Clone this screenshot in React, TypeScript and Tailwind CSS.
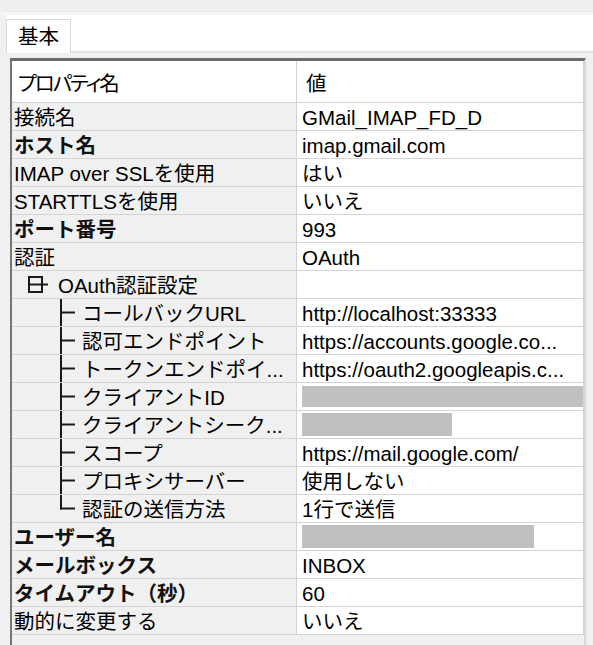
type Row = {
  label: string;
  value?: string;
  bold?: boolean;
  group?: boolean;
  child?: boolean;
  last?: boolean;
  mask?: number | "full";
};

const rows: Row[] = [
  { label: "接続名", value: "GMail_IMAP_FD_D" },
  { label: "ホスト名", value: "imap.gmail.com", bold: true },
  { label: "IMAP over SSLを使用", value: "はい" },
  { label: "STARTTLSを使用", value: "いいえ" },
  { label: "ポート番号", value: "993", bold: true },
  { label: "認証", value: "OAuth" },
  { label: "OAuth認証設定", group: true },
  { label: "コールバックURL", value: "http://localhost:33333", child: true },
  { label: "認可エンドポイント", value: "https://accounts.google.co...", child: true },
  { label: "トークンエンドポイ...", value: "https://oauth2.googleapis.c...", child: true },
  { label: "クライアントID", mask: "full", child: true },
  { label: "クライアントシーク...", mask: 150, child: true },
  { label: "スコープ", value: "https://mail.google.com/", child: true },
  { label: "プロキシサーバー", value: "使用しない", child: true },
  { label: "認証の送信方法", value: "1行で送信", child: true, last: true },
  { label: "ユーザー名", mask: 232, bold: true },
  { label: "メールボックス", value: "INBOX", bold: true },
  { label: "タイムアウト（秒）", value: "60", bold: true },
  { label: "動的に変更する", value: "いいえ" },
];

function Expander() {
  return (
    <svg width="20" height="17" viewBox="0 0 20 17" className="shrink-0">
      <rect x="1" y="1" width="13" height="15" fill="none" stroke="#1a1a1a" strokeWidth="2" />
      <line x1="1" y1="8.5" x2="20" y2="8.5" stroke="#1a1a1a" strokeWidth="2" />
    </svg>
  );
}

function Branch({ last }: { last?: boolean }) {
  return (
    <svg width="23" height="27" viewBox="0 0 23 27" className="shrink-0 overflow-visible">
      <line x1="2" y1="0" x2="2" y2={last ? 14.5 : 28} stroke="#1a1a1a" strokeWidth="2" />
      <line x1="1" y1="13.5" x2="16" y2="13.5" stroke="#1a1a1a" strokeWidth="2" />
    </svg>
  );
}

function LabelCell({ row }: { row: Row }) {
  const base =
    "h-[28px] border-b border-r border-[#d4d4d4] bg-[#f0f0f0] flex items-center whitespace-nowrap overflow-hidden";
  if (row.group) {
    return (
      <div className={`${base} pl-[16px] gap-[10px]`}>
        <Expander />
        <span className="pt-[3px]">{row.label}</span>
      </div>
    );
  }
  if (row.child) {
    return (
      <div className={`${base} pl-[47px]`}>
        <Branch last={row.last} />
        <span className="pt-[3px]">{row.label}</span>
      </div>
    );
  }
  return (
    <div className={`${base} pl-[2px] pt-[3px] ${row.bold ? "font-bold text-[#111]" : ""}`}>
      {row.label}
    </div>
  );
}

function ValueCell({ row }: { row: Row }) {
  return (
    <div className="h-[28px] border-b border-r border-[#d4d4d4] bg-white flex items-center pl-[5px] whitespace-nowrap overflow-hidden">
      {row.mask === "full" && <div className="h-[21px] flex-1 bg-[#c0c0c0]" />}
      {typeof row.mask === "number" && (
        <div className="h-[23px] bg-[#c0c0c0]" style={{ width: row.mask }} />
      )}
      {row.value && <span className="pt-[3px]">{row.value}</span>}
    </div>
  );
}

export default function App() {
  return (
    <div className="w-[593px] h-[645px] overflow-hidden bg-[#f0f0f0] text-[20.5px] leading-none text-black font-['Liberation_Sans','Noto_Sans_CJK_JP',sans-serif]">
      <div className="h-[15px] bg-[#efefef] border-b-[3px] border-[#f6f6f6]" />

      {/* tab strip */}
      <div className="ml-[6px] h-[38px] bg-white flex items-end">
        <div className="w-[65px] h-[34px] border-l border-t border-r border-[#d9d9d9] flex items-center pl-[11px] pt-[1px]">
          基本
        </div>
        <div className="flex-1 border-b-2 border-[#e2e2e2]" />
      </div>

      <div className="h-[5px]" />

      {/* property grid */}
      <div className="ml-[10px] w-[576px] h-[600px] border-t-[3px] border-l-2 border-r-2 border-t-[#6c6c6c] border-l-[#767676] border-r-[#d8d8d8] bg-[#f0f0f0]">
        <div className="grid grid-cols-[285px_287px]">
          <div className="h-[42px] bg-white border-b border-r border-[#d4d4d4] flex items-center pl-[6px] pt-[5px] tracking-[-2px] [font-feature-settings:'palt']">
            プロパティ名
          </div>
          <div className="h-[42px] bg-white border-b border-r border-[#d4d4d4] flex items-center pl-[9px] pt-[5px]">
            値
          </div>
          {rows.map((row, i) => (
            <div key={i} className="contents">
              <LabelCell row={row} />
              <ValueCell row={row} />
            </div>
          ))}
        </div>
      </div>
    </div>
  );
}
